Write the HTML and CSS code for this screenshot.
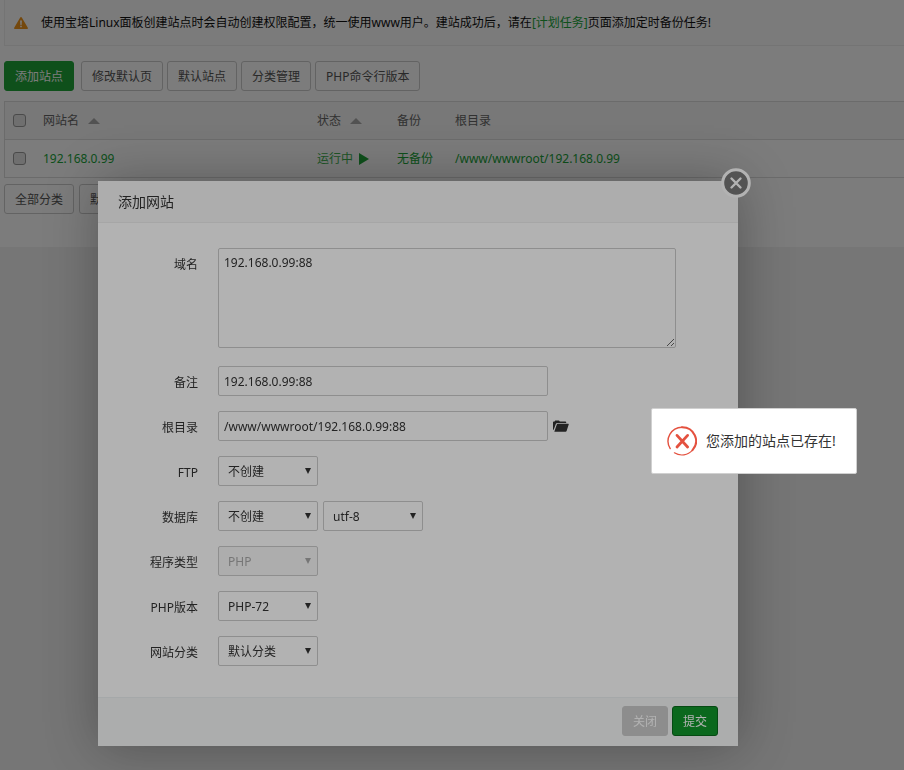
FILE: index.html
```html
<!DOCTYPE html>
<html lang="zh-CN">
<head>
<meta charset="utf-8">
<title>网站</title>
<link rel="stylesheet" href="styles.css">
</head>
<body>
<main class="page">
  <div class="notice">
    <svg class="notice-icon" viewBox="0 0 14 12" aria-hidden="true"><path d="M6.2.6a.9.9 0 0 1 1.6 0l6 10.1a.9.9 0 0 1-.8 1.3H1a.9.9 0 0 1-.8-1.3z" fill="#f0951c"/><path d="M6.1 3.6h1.8L7.6 8H6.4zM6.2 8.8h1.6v1.5H6.2z" fill="#fff"/></svg>
    <p>使用宝塔Linux面板创建站点时会自动创建权限配置，统一使用www用户。建站成功后，请在<a href="#crontab">[计划任务]</a>页面添加定时备份任务!</p>
  </div>
  <div class="toolbar">
    <button class="btn btn-primary" type="button">添加站点</button>
    <button class="btn" type="button">修改默认页</button>
    <button class="btn" type="button">默认站点</button>
    <button class="btn" type="button">分类管理</button>
    <button class="btn" type="button">PHP命令行版本</button>
  </div>
  <table class="sites">
    <colgroup><col class="col-check"><col class="col-name"><col class="col-state"><col class="col-backup"><col></colgroup>
    <thead>
      <tr>
        <th><input type="checkbox" aria-label="全选"></th>
        <th>网站名<span class="sort"></span></th>
        <th>状态<span class="sort"></span></th>
        <th>备份</th>
        <th>根目录</th>
      </tr>
    </thead>
    <tbody>
      <tr>
        <td><input type="checkbox" aria-label="192.168.0.99"></td>
        <td><a href="#site">192.168.0.99</a></td>
        <td><a class="running" href="#state">运行中<span class="play"></span></a></td>
        <td><a href="#backup">无备份</a></td>
        <td><a href="#path">/www/wwwroot/192.168.0.99</a></td>
      </tr>
    </tbody>
  </table>
  <div class="filters">
    <button class="btn" type="button">全部分类</button>
    <button class="btn" type="button">默认分类</button>
  </div>
</main>

<div class="shade"></div>

<section class="dialog" role="dialog" aria-labelledby="dialog-title">
  <h2 class="dialog-title" id="dialog-title">添加网站</h2>
  <button class="dialog-close" type="button" aria-label="关闭窗口">
    <svg viewBox="0 0 30 30" aria-hidden="true"><circle cx="15" cy="15" r="13.3" fill="#777" stroke="#fff" stroke-width="3"/><path d="M10.5 10.5l9 9M19.5 10.5l-9 9" stroke="#fff" stroke-width="2.4" fill="none" stroke-linecap="round"/></svg>
  </button>
  <form>
    <div class="fields">
      <div class="row row-tall">
        <label for="domain">域名</label>
        <textarea class="control" id="domain">192.168.0.99:88</textarea>
      </div>
      <div class="row">
        <label for="remark">备注</label>
        <input class="control" id="remark" type="text" value="192.168.0.99:88">
      </div>
      <div class="row">
        <label for="root">根目录</label>
        <input class="control" id="root" type="text" value="/www/wwwroot/192.168.0.99:88">
        <button class="folder" type="button" aria-label="选择目录"><svg viewBox="0 0 16 12" aria-hidden="true"><path d="M0 9V2.2Q0 1.4.8 1.4H1.6L2.2.6H6L6.8 1.4H12.4Q13.2 1.4 13.2 2.2V3H4.4Q3.2 3 2.8 4L.6 10Q0 9.8 0 9z"/><path d="M4.6 3.8H15.2Q16 3.8 15.7 4.6L13.6 11Q13.3 11.7 12.6 11.7H1.3L3.8 4.4Q4 3.8 4.6 3.8z"/></svg></button>
      </div>
      <div class="row">
        <label for="ftp">FTP</label>
        <span class="select"><select class="control" id="ftp"><option>不创建</option></select></span>
      </div>
      <div class="row">
        <label for="db">数据库</label>
        <span class="select"><select class="control" id="db"><option>不创建</option></select></span>
        <span class="select"><select class="control" aria-label="编码"><option>utf-8</option></select></span>
      </div>
      <div class="row">
        <label for="kind">程序类型</label>
        <span class="select is-disabled"><select class="control" id="kind" disabled><option>PHP</option></select></span>
      </div>
      <div class="row">
        <label for="version">PHP版本</label>
        <span class="select"><select class="control" id="version"><option>PHP-72</option></select></span>
      </div>
      <div class="row">
        <label for="group">网站分类</label>
        <span class="select"><select class="control" id="group"><option>默认分类</option></select></span>
      </div>
    </div>
    <div class="dialog-actions">
      <button class="btn btn-muted" type="button">关闭</button>
      <button class="btn btn-submit" type="button">提交</button>
    </div>
  </form>
</section>

<div class="shade"></div>

<div class="toast" role="alert">
  <svg viewBox="0 0 30 30" aria-hidden="true"><g fill="none" stroke="#e4513f" stroke-linecap="round"><path d="M3.2 22.6A14 14 0 0 1 15 1.2" stroke-width="1.4"/><path d="M15 1.2A13.8 13.8 0 0 1 25.5 24.2" stroke-width="2"/><path d="M25.5 24.2A14 14 0 0 1 7.4 26.8" stroke-width="1.2"/><path d="M10 9.4l10.6 11.6M20.6 9.4L10 21" stroke-width="2.8"/></g></svg>
  <span>您添加的站点已存在!</span>
</div>
</body>
</html>
```
FILE: styles.css
```css
* { box-sizing: border-box; }

body {
  margin: 0;
  min-height: 100vh;
  background: #f3f3f3;
  color: #333;
  font: 12px/18px "Noto Sans", "Noto Sans CJK SC", sans-serif;
  overflow: hidden;
}

button, input, select, textarea { font: inherit; color: inherit; }
a { color: #20a53a; text-decoration: none; }

.page { padding: 0 0 33px 4px; background: #fff; }

.notice {
  display: flex;
  align-items: center;
  gap: 13px;
  height: 46px;
  padding-left: 9px;
  border: solid #f0f0f0;
  border-width: 0 0 1px 1px;
  background: #fcfcfc;
  color: #111;
}
.notice p { margin: 0; white-space: nowrap; }
.notice-icon { width: 14px; height: 12px; flex: none; }

.toolbar { display: flex; gap: 4px; padding: 15px 0 10px; }
.filters { display: flex; gap: 5px; padding-top: 6px; }

.btn {
  height: 30px;
  padding: 2px 10px 0;
  border: 1px solid #ccc;
  border-radius: 3px;
  background: #fff;
  color: #555;
  white-space: nowrap;
}
.btn-primary { margin-right: 3px; border-color: #20a53a; background: #20a53a; color: #fff; }

.sites {
  width: 100%;
  table-layout: fixed;
  border-collapse: separate;
  border-spacing: 0;
  border: solid #ddd;
  border-width: 1px 0 0 1px;
}
.col-check { width: 30px; }
.col-name { width: 274px; }
.col-state { width: 80px; }
.col-backup { width: 58px; }
.sites th, .sites td {
  height: 38px;
  padding: 0 8px;
  border-bottom: 1px solid #ddd;
  font-weight: normal;
  text-align: left;
  white-space: nowrap;
}
.sites th { background: #f6f6f6; color: #666; }
.sites input {
  appearance: none;
  display: block;
  width: 13px;
  height: 13px;
  margin: 0;
  border: 1px solid #999;
  border-radius: 3px;
  background: #e4e4e4;
}
.sort {
  display: inline-block;
  margin-left: 9px;
  vertical-align: 1px;
  border: solid transparent;
  border-width: 0 6px 6px;
  border-bottom-color: #aaa;
}
.running { color: #40b050; }
.play {
  display: inline-block;
  margin-left: 6px;
  vertical-align: -2px;
  border: solid transparent;
  border-width: 6px 0 6px 10px;
  border-left-color: #20a53a;
}

.shade { position: fixed; inset: 0; background: rgba(0, 0, 0, .3); }

.dialog {
  position: absolute;
  top: 181px;
  left: 98px;
  width: 640px;
  background: #fff;
  box-shadow: 1px 1px 50px rgba(0, 0, 0, .3);
}
.dialog-title {
  margin: 0;
  padding: 0 20px;
  border-bottom: 1px solid #eee;
  background: #f8f8f8;
  font-size: 14px;
  font-weight: normal;
  line-height: 41px;
}
.dialog-close {
  position: absolute;
  top: -13px;
  right: -13px;
  width: 30px;
  height: 30px;
  padding: 0;
  border: 0;
  background: none;
}
.dialog-close svg, .folder svg { display: block; width: 100%; height: 100%; }

.fields { display: grid; gap: 15px; padding: 25px 0 31px; }
.row { display: flex; gap: 5px; }
.row-tall { margin-bottom: 3px; }
.row label { width: 100px; margin-right: 15px; line-height: 34px; height: 30px; text-align: right; }

.control {
  width: 330px;
  height: 30px;
  padding: 0 5px;
  border: 1px solid #ccc;
  border-radius: 2px;
  background: #fff;
  outline: 0;
}
textarea.control { width: 458px; height: 100px; padding: 5px; }
.select { position: relative; width: 100px; }
.select .control { appearance: none; width: 100%; padding: 2px 9px 0; opacity: 1; }
.select::after {
  content: "";
  position: absolute;
  top: 12px;
  right: 7px;
  border: solid transparent;
  border-width: 6px 3px 0;
  border-top-color: #333;
  pointer-events: none;
}
.is-disabled .control { background: #f8f8f8; color: #aaa; }
.is-disabled::after { border-top-color: #aaa; }

.folder { align-self: center; width: 16px; height: 12px; padding: 0; border: 0; background: none; fill: #333; }

.dialog-actions {
  display: flex;
  justify-content: flex-end;
  gap: 4px;
  padding: 8px 20px 10px;
  border-top: 1px solid #edf1f2;
  background: #f6f8f8;
}
.btn-muted { border-color: #cbcbcb; background: #cbcbcb; color: #fff; }
.btn-submit { border-color: #0a6a1c; background: #10952a; color: #fff; }

.toast {
  position: absolute;
  top: 408px;
  left: 651px;
  display: flex;
  align-items: center;
  gap: 9px;
  height: 66px;
  padding: 0 20px 0 15px;
  border: 1px solid #d0d0d0;
  border-radius: 2px;
  background: #fff;
  font-size: 14px;
  white-space: nowrap;
}
.toast svg { width: 30px; height: 30px; }
```
